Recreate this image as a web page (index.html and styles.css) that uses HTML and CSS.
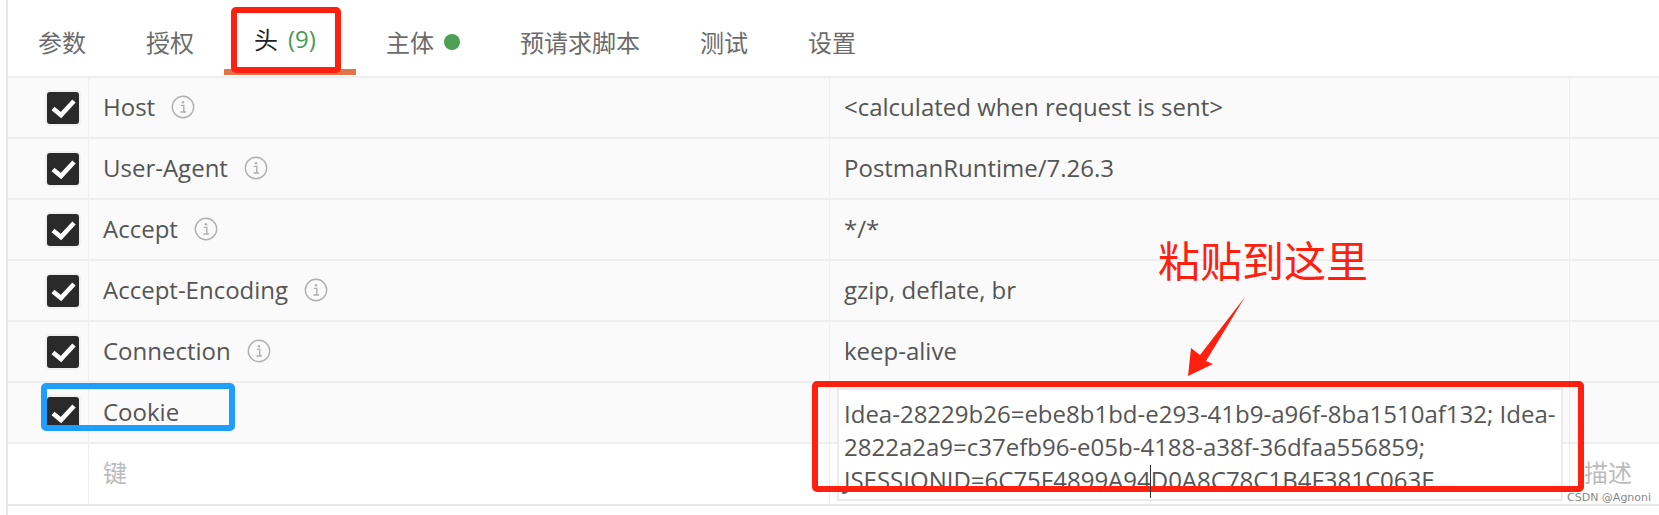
FILE: index.html
```html
<!DOCTYPE html>
<html>
<head>
  <title>Headers</title>
  <link rel="stylesheet" href="styles.css">
</head>
<body>
  <svg class="defs" width="0" height="0">
    <symbol id="info" viewBox="0 0 24 24">
      <circle cx="12" cy="12" r="10.7" fill="none" stroke="#b0b0b0" stroke-width="1.4"/>
      <circle cx="12" cy="7.2" r="1.2" fill="#b0b0b0"/>
      <path d="M9.8 10.4h3v6.4M9.4 17h5.6" fill="none" stroke="#b0b0b0" stroke-width="1.4"/>
    </symbol>
    <symbol id="check" viewBox="0 0 32 32">
      <path d="M6 16.5l8 6.5L27 9" fill="none" stroke="#fff" stroke-width="4.6"/>
    </symbol>
  </svg>

  <div class="page">
    <div class="tabs">
      <div class="tab">参数</div>
      <div class="tab">授权</div>
      <div class="tab active">头<span class="count">(9)</span></div>
      <div class="tab">主体<span class="dot"></span></div>
      <div class="tab">预请求脚本</div>
      <div class="tab">测试</div>
      <div class="tab">设置</div>
    </div>

    <div class="table">
      <div class="row">
        <div class="cell check"><span class="box"><svg><use href="#check"/></svg></span></div>
        <div class="cell name">Host<svg class="info"><use href="#info"/></svg></div>
        <div class="cell value">&lt;calculated when request is sent&gt;</div>
        <div class="cell desc"></div>
      </div>
      <div class="row">
        <div class="cell check"><span class="box"><svg><use href="#check"/></svg></span></div>
        <div class="cell name">User-Agent<svg class="info"><use href="#info"/></svg></div>
        <div class="cell value">PostmanRuntime/7.26.3</div>
        <div class="cell desc"></div>
      </div>
      <div class="row">
        <div class="cell check"><span class="box"><svg><use href="#check"/></svg></span></div>
        <div class="cell name">Accept<svg class="info"><use href="#info"/></svg></div>
        <div class="cell value">*/*</div>
        <div class="cell desc"></div>
      </div>
      <div class="row">
        <div class="cell check"><span class="box"><svg><use href="#check"/></svg></span></div>
        <div class="cell name">Accept-Encoding<svg class="info"><use href="#info"/></svg></div>
        <div class="cell value">gzip, deflate, br</div>
        <div class="cell desc"></div>
      </div>
      <div class="row">
        <div class="cell check"><span class="box"><svg><use href="#check"/></svg></span></div>
        <div class="cell name">Connection<svg class="info"><use href="#info"/></svg></div>
        <div class="cell value">keep-alive</div>
        <div class="cell desc"></div>
      </div>
      <div class="row">
        <div class="cell check"><span class="box"><svg><use href="#check"/></svg></span></div>
        <div class="cell name">Cookie</div>
        <div class="cell value"></div>
        <div class="cell desc"></div>
      </div>
      <div class="row empty">
        <div class="cell check"></div>
        <div class="cell name placeholder">键</div>
        <div class="cell value"></div>
        <div class="cell desc placeholder">描述</div>
      </div>
    </div>
  </div>

  <!-- expanded value editor -->
  <div class="editor">Idea-28229b26=ebe8b1bd-e293-41b9-a96f-8ba1510af132; Idea-2822a2a9=c37efb96-e05b-4188-a38f-36dfaa556859; JSESSIONID=6C75F4899A94<span class="caret"></span>D0A8C78C1B4F381C063E</div>

  <!-- annotations drawn on the screenshot -->
  <div class="mark mark-tab"></div>
  <div class="mark mark-cookie"></div>
  <div class="mark mark-editor"></div>
  <div class="note">粘贴到这里</div>
  <svg class="arrow" width="1659" height="515">
    <polygon points="1245,297 1200,355 1191,348 1188,376 1213,364 1206,361" fill="#ff2010"/>
  </svg>
  <div class="watermark">CSDN @Agnoni</div>
</body>
</html>
```

FILE: styles.css
```css
body {
  margin: 0;
  background-color: #fff;
  color: #555;
  font-family: "Open Sans", "Noto Sans CJK SC", sans-serif;
  font-size: 24px;
}

.defs {
  position: absolute;
}

.page {
  height: 515px;
  margin-left: 6px;
  border-left: 2px solid #e8e8e8;
  box-sizing: border-box;
  overflow: hidden;
}

.tabs {
  display: flex;
  height: 77px;
}

.tab {
  display: flex;
  align-items: center;
  height: 69px;
  padding: 14px 30px 0;
  box-sizing: border-box;
  font-family: "Noto Sans CJK SC", sans-serif;
  font-size: 24px;
  color: #6b6b6b;
}

.tab.active {
  height: 75px;
  padding-right: 40px;
  padding-top: 8px;
  color: #222;
  border-bottom: 6px solid #e2734b;
}

.count {
  margin-left: 10px;
  font-family: "Open Sans", sans-serif;
  font-size: 24px;
  color: #4a9c52;
}

.dot {
  width: 16px;
  height: 16px;
  margin-left: 10px;
  border-radius: 50%;
  background-color: #4c9f54;
}

.table {
  margin-top: -1px;
  border-bottom: 2px solid #e8e8e8;
}

.row {
  display: grid;
  grid-template-columns: 81px 741px 740px 1fr;
  height: 61px;
  box-sizing: border-box;
  border-top: 2px solid #eee;
  background-color: #fafafa;
}

.row.empty {
  height: 62px;
  background-color: #fff;
}

.cell {
  display: flex;
  align-items: center;
  box-sizing: border-box;
  border-right: 1px solid #eee;
}

.cell.desc {
  border-right: none;
}

.cell.check {
  padding-left: 39px;
}

.cell.name,
.cell.value {
  padding-left: 14px;
  padding-bottom: 2px;
}

.box {
  display: block;
  width: 32px;
  height: 32px;
  border-radius: 3px;
  background-color: #2a2a2a;
  box-shadow: 0 0 0 2px #f0f0f0;
}

.box svg {
  display: block;
  width: 32px;
  height: 32px;
}

.info {
  width: 24px;
  height: 24px;
  margin-left: 16px;
}

.placeholder {
  font-family: "Noto Sans CJK SC", sans-serif;
  font-size: 24px;
  color: #bbb;
}

.cell.name.placeholder {
  padding-bottom: 6px;
}

.cell.desc.placeholder {
  padding-left: 14px;
  padding-bottom: 6px;
}

.editor {
  position: absolute;
  left: 837px;
  top: 388px;
  width: 726px;
  height: 113px;
  padding: 7px 1px 0 5px;
  box-sizing: border-box;
  background-color: #fff;
  border: 2px solid #ececec;
  color: #555;
  line-height: 33px;
}

.caret {
  position: relative;
}

.caret::after {
  content: "";
  position: absolute;
  z-index: 1;
  left: -1px;
  top: 2px;
  width: 1px;
  height: 33px;
  background-color: #333;
}

.mark {
  position: absolute;
  box-sizing: border-box;
  border-style: solid;
  border-width: 6px;
  border-radius: 5px;
}

.mark-tab {
  left: 231px;
  top: 7px;
  width: 110px;
  height: 66px;
  border-color: #ff2010;
}

.mark-cookie {
  left: 41px;
  top: 383px;
  width: 194px;
  height: 48px;
  border-color: #1e9fff;
}

.mark-editor {
  left: 812px;
  top: 381px;
  width: 772px;
  height: 111px;
  border-color: #ff2010;
}

.note {
  position: absolute;
  left: 1158px;
  top: 229px;
  font-family: "Noto Sans CJK SC", sans-serif;
  font-size: 42px;
  line-height: 60px;
  color: #ff2010;
}

.arrow {
  position: absolute;
  left: 0;
  top: 0;
}

.watermark {
  position: absolute;
  left: 1567px;
  top: 491px;
  font-family: "DejaVu Sans", sans-serif;
  font-size: 11px;
  line-height: 14px;
  color: #888;
}
```
